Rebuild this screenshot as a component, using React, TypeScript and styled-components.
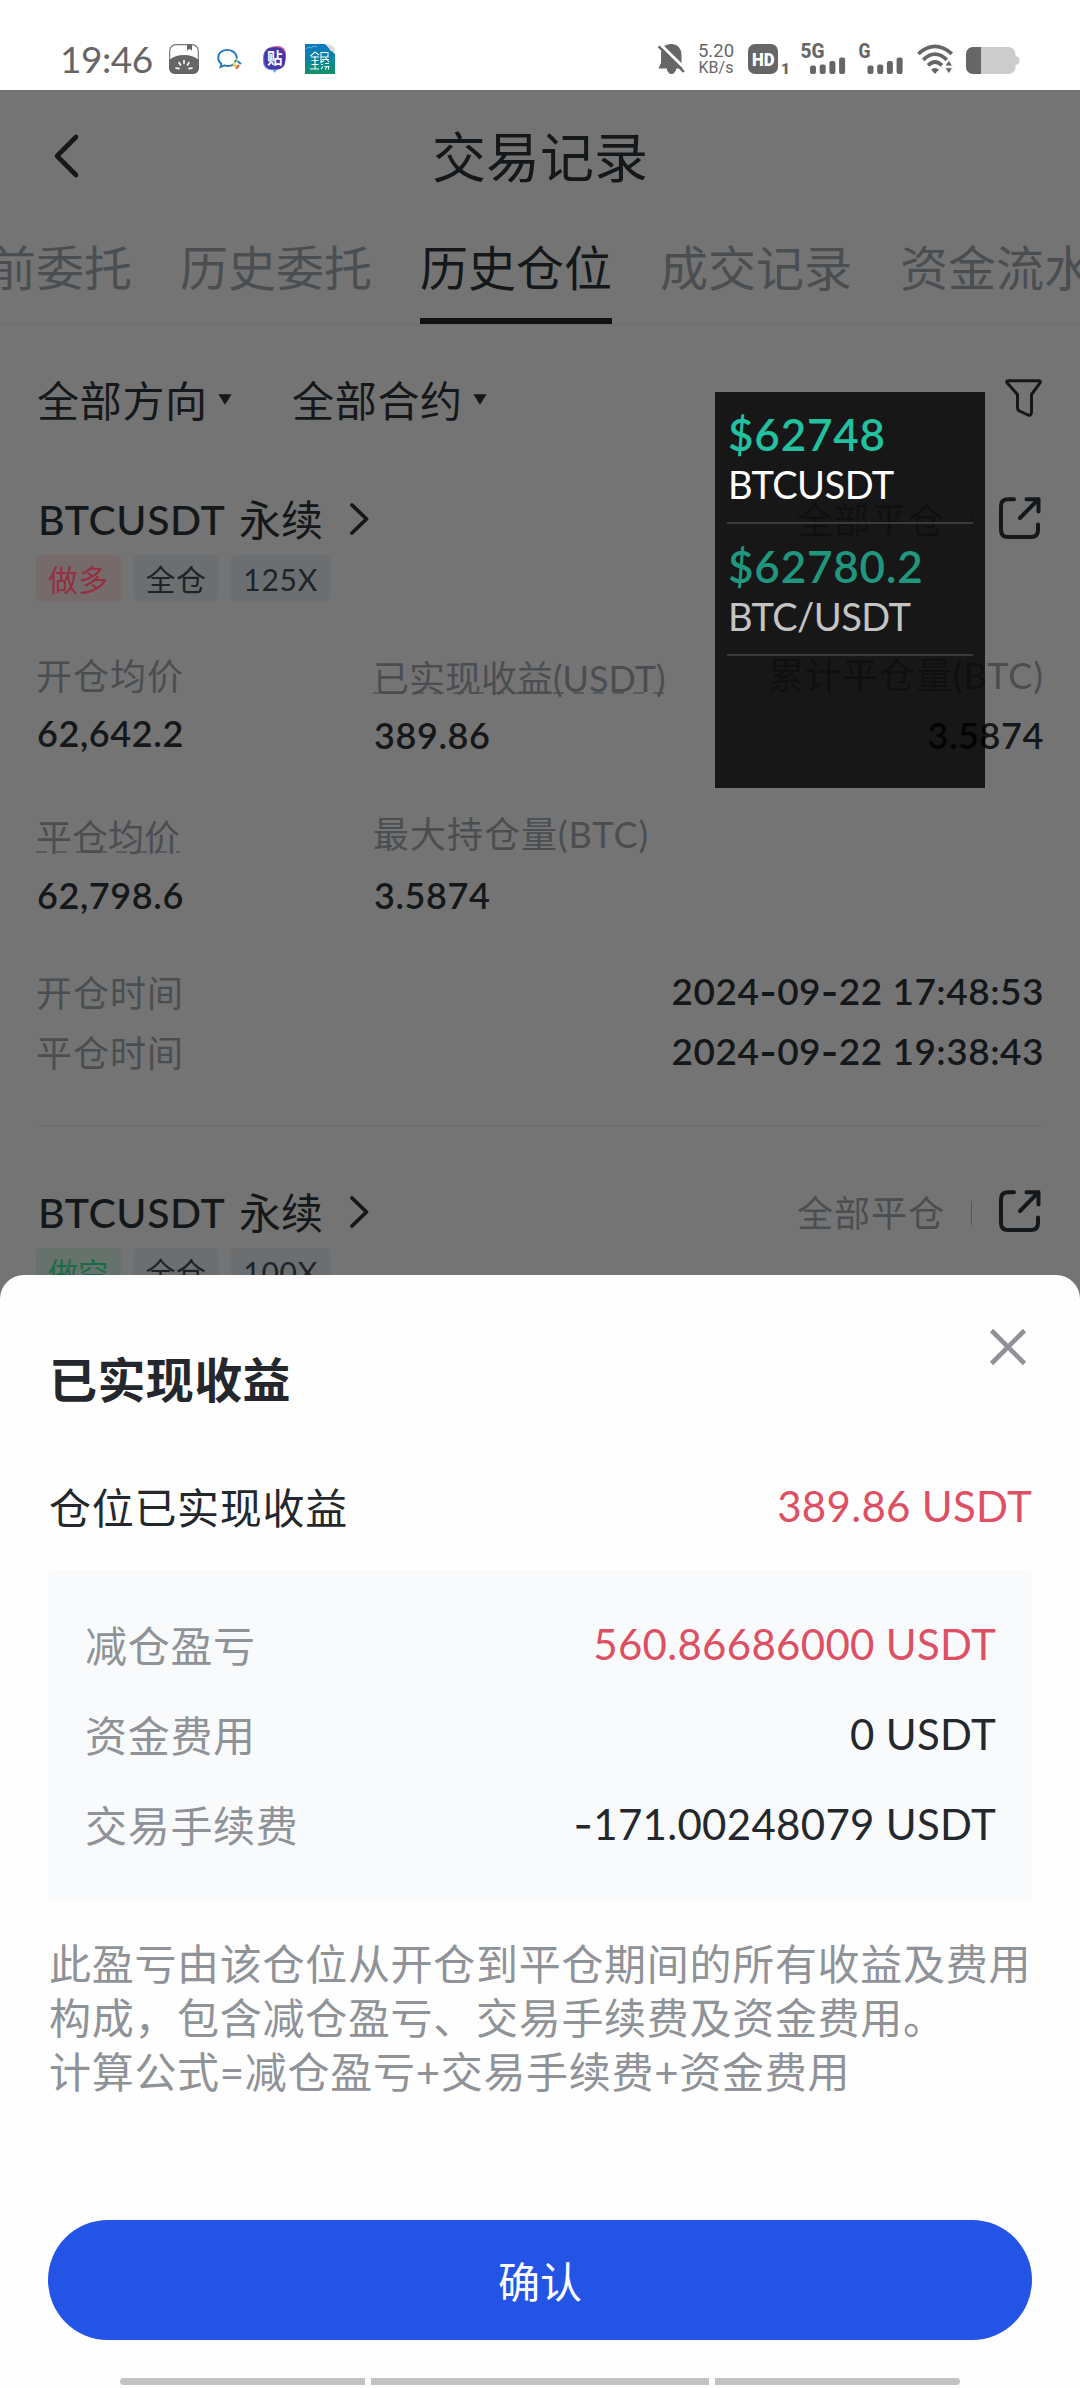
import React from "react";
import styled, { createGlobalStyle } from "styled-components";

const GlobalStyle = createGlobalStyle`
  * { box-sizing: border-box; }
  html, body { margin: 0; padding: 0; background: #fff; }
  body { font-family: Lato, "Noto Sans CJK SC", sans-serif; -webkit-font-smoothing: antialiased; }
`;

const ink = "#15181a";
const dim = "#4b4e51";
const grey = "#8f9397";
const red = "#dd5063";

const Phone = styled.div`
  position: relative;
  width: 1080px;
  height: 2388px;
  display: flex;
  flex-direction: column;
  overflow: hidden;
  background: #747474;
  white-space: nowrap;
`;

/* ---------- status bar ---------- */
const StatusBar = styled.div`
  height: 90px;
  flex: none;
  display: flex;
  align-items: flex-start;
  justify-content: space-between;
  padding: 44px 60px 0;
  background: #fff;
  color: #666;
`;
const StatusGroup = styled.div`
  display: flex;
  align-items: flex-start;
`;
const Clock = styled.div`
  width: 109px;
  font-size: 37px;
  line-height: 29px;
  letter-spacing: -0.5px;
`;
const Icon = styled.svg<{ $w: number; $h: number; $ml?: number; $mt?: number }>`
  display: block;
  flex: none;
  width: ${(p) => p.$w}px;
  height: ${(p) => p.$h}px;
  margin-left: ${(p) => p.$ml ?? 0}px;
  margin-top: ${(p) => p.$mt ?? 0}px;
  overflow: visible;
`;
const NetSpeed = styled.div`
  display: flex;
  flex-direction: column;
  align-items: center;
  width: 40px;
  margin-left: 11px;
  font-family: Roboto, sans-serif;
  font-size: 18.5px;
  line-height: 15px;
`;
const SpeedUnit = styled.span`
  font-size: 16px;
  line-height: 18px;
`;

/* ---------- page behind the sheet ---------- */
const Main = styled.div`
  height: 1185px;
  flex: none;
  overflow: hidden;
  color: ${ink};
`;
const Header = styled.div`
  height: 136px;
  display: grid;
  grid-template-columns: 200px 1fr 200px;
  align-items: center;
`;
const Title = styled.div`
  font-size: 54px;
  line-height: 60px;
  text-align: center;
`;
const Tabs = styled.div`
  height: 99px;
  display: flex;
  gap: 48px;
  margin-left: -60px;
  width: 1200px;
  border-bottom: 1px solid #6e6e6e;
`;
const Tab = styled.div<{ $active?: boolean }>`
  width: 192px;
  flex: none;
  height: 98px;
  font-size: 48px;
  line-height: 83px;
  color: ${(p) => (p.$active ? ink : dim)};
  border-bottom: 6px solid ${(p) => (p.$active ? "#101213" : "transparent")};
`;
const Filters = styled.div`
  height: 151px;
  display: flex;
  align-items: center;
  padding: 0 38px 0 37px;
  font-size: 42px;
  line-height: 60px;
  letter-spacing: 0.7px;
`;
const Filter = styled.div`
  display: flex;
  align-items: center;
  width: 255px;
`;
const Spacer = styled.div`
  flex: 1;
`;

const Record = styled.div`
  height: 693px;
  padding: 9px 36px 0;
`;
const RecordHead = styled.div`
  height: 70px;
  display: flex;
  align-items: center;
  padding-right: 3px;
`;
const Symbol = styled.span`
  width: 203px;
  padding-left: 2px;
  font-size: 41px;
  font-weight: 500;
  line-height: 60px;
  letter-spacing: 0.6px;
`;
const Kind = styled.span`
  font-size: 42px;
  line-height: 60px;
`;
const CloseState = styled.span`
  font-size: 36px;
  line-height: 60px;
  letter-spacing: 1px;
  color: ${dim};
`;
const Bar = styled.span`
  width: 1px;
  height: 24px;
  margin: 0 27px 0 26px;
  background: #55585a;
`;
const Tags = styled.div`
  display: flex;
  gap: 13px;
`;
const Tag = styled.span<{ $tone?: "long" | "short" }>`
  height: 47px;
  padding: 0 12px;
  border-radius: 5px;
  font-size: 30px;
  line-height: 48px;
  letter-spacing: 0.3px;
  color: ${(p) => (p.$tone === "long" ? "#952f41" : p.$tone === "short" ? "#1c6b47" : "#1f2327")};
  background: ${(p) => (p.$tone === "long" ? "#766b6b" : p.$tone === "short" ? "#67726c" : "#6b6f71")};
`;
const Lever = styled.span`
  display: inline-block;
  min-width: 74px;
  text-align: center;
  letter-spacing: 0.8px;
`;
const Stats = styled.div<{ $h: number; $mt?: number }>`
  height: ${(p) => p.$h}px;
  margin-top: ${(p) => p.$mt ?? 0}px;
  display: grid;
  grid-template-columns: 337px 1fr auto;
`;
const Cell = styled.div<{ $right?: boolean; $top?: number }>`
  display: flex;
  flex-direction: column;
  align-items: ${(p) => (p.$right ? "flex-end" : "flex-start")};
  padding-top: ${(p) => p.$top ?? 0}px;
`;
const Label = styled.div<{ $h: number; $dashed?: boolean }>`
  height: ${(p) => p.$h}px;
  font-size: 36px;
  line-height: ${(p) => p.$h}px;
  letter-spacing: ${(p) => (p.$dashed ? 0 : 1)}px;
  color: ${dim};
  background: ${(p) =>
    p.$dashed
      ? "repeating-linear-gradient(90deg, #585b5d 0 11px, transparent 11px 20px) 0 42px / 100% 2px no-repeat"
      : "none"};
`;
const Value = styled.div<{ $h: number }>`
  padding-left: 1px;
  font-size: 36px;
  font-weight: 600;
  line-height: ${(p) => p.$h}px;
  letter-spacing: 0.6px;
`;
const TimeRow = styled.div`
  height: 60px;
  display: flex;
  justify-content: space-between;
  line-height: 60px;
  font-size: 36px;
  letter-spacing: 1px;
  color: ${dim};
`;
const TimeValue = styled.span`
  line-height: 56px;
  font-size: 37px;
  font-weight: 600;
  letter-spacing: 0.5px;
  color: ${ink};
`;
const Dash = styled.span`
  font-family: Inter, sans-serif;
  line-height: 0;
`;
const Rule = styled.div`
  height: 2px;
  margin-top: 42px;
  background: #6f6f6f;
`;

/* ---------- floating ticker ---------- */
const Ticker = styled.div`
  position: absolute;
  left: 715px;
  top: 392px;
  width: 270px;
  height: 396px;
  padding: 0 12px;
  background: rgba(0, 0, 0, 0.8);
`;
const Quote = styled.div<{ $dim?: boolean }>`
  height: 132px;
  padding: 16px 0 0 1px;
  border-bottom: 2px solid #3a3a3a;
  color: ${(p) => (p.$dim ? "#c4c4c4" : "#fff")};
`;
const Price = styled.div<{ $dim?: boolean }>`
  font-size: 44px;
  font-weight: 600;
  line-height: 52px;
  letter-spacing: 0.8px;
  color: ${(p) => (p.$dim ? "#20967e" : "#22c1a0")};
`;
const Pair = styled.div`
  font-size: 38px;
  line-height: 48px;
  letter-spacing: -0.5px;
`;

/* ---------- bottom sheet ---------- */
const Sheet = styled.div`
  flex: 1;
  display: flex;
  flex-direction: column;
  padding: 0 48px;
  border-radius: 24px 24px 0 0;
  background: #fefefe;
  color: #24282c;
`;
const SheetHead = styled.div`
  height: 176px;
  display: flex;
  justify-content: space-between;
`;
const SheetTitle = styled.div`
  margin-top: 75px;
  padding-left: 1px;
  font-size: 48px;
  line-height: 60px;
  font-weight: 700;
  letter-spacing: 0.4px;
`;
const SummaryRow = styled.div`
  height: 114px;
  margin-bottom: 5px;
  padding-left: 1px;
  display: flex;
  justify-content: space-between;
  font-size: 42px;
  line-height: 114px;
  letter-spacing: 0.7px;
`;
const Amount = styled.span<{ $red?: boolean }>`
  margin-top: -2px;
  font-size: 42px;
  letter-spacing: 0.3px;
  color: ${(p) => (p.$red ? red : "#24282c")};
`;
const Breakdown = styled.div`
  height: 329px;
  padding: 31px 36px 0 37px;
  border-radius: 4px;
  background: #f9fafc;
`;
const BreakdownRow = styled.div`
  height: 90px;
  display: flex;
  justify-content: space-between;
  font-size: 42px;
  line-height: 90px;
  letter-spacing: 0.7px;
  color: ${grey};
`;
const Note = styled.div`
  margin-top: 38px;
  padding-left: 1px;
  font-size: 42px;
  line-height: 54px;
  letter-spacing: 0.7px;
  color: ${grey};
`;
const Confirm = styled.button`
  height: 120px;
  margin-top: auto;
  border: 0;
  border-radius: 60px;
  background: #2454e6;
  color: #fff;
  font: 400 42px/122px Lato, "Noto Sans CJK SC", sans-serif;
`;
const NavBars = styled.div`
  height: 48px;
  flex: none;
  display: flex;
  gap: 6px;
  padding: 38px 72px 3px;
`;
const NavBar = styled.span<{ $w: number; $radius: string }>`
  width: ${(p) => p.$w}px;
  height: 7px;
  border-radius: ${(p) => p.$radius};
  background: #c3c3c3;
`;

/* ---------- icons ---------- */
const MelonIcon = () => (
  <Icon $w={30} $h={30} viewBox="0 0 30 30">
    <rect x=".7" y=".7" width="28.6" height="28.6" rx="6" fill="#fff" stroke="#777" strokeWidth="1.2" />
    <path d="M.3 16C4 12.500 9 11 15 11s11 1.500 14.700 5l.3 8a6 6 0 0 1-6 6H6a6 6 0 0 1-6-6z" fill="#666" />
    <path d="M18 .8h5v6l-2.500-2-2.500 2z" fill="#666" />
    <path d="M15 16.500v3M10 18.500l1.500 2.500M20 18.500L18.500 21M7 24l3 .6M23 24l-3 .6" stroke="#fff" strokeWidth="1.600" strokeLinecap="round" />
  </Icon>
);
const ChatIcon = () => (
  <Icon $w={25} $h={22} $ml={18} $mt={5} viewBox="0 0 25 22">
    <path d="M17.500 14.800C15 17 10.500 17.500 7.500 16.300L3.600 18l.7-3.300C-.6 10.500.6 3.600 6.500 1.600c6.500-2.200 13.500 1.600 13.300 8.100" fill="none" stroke="#2277bd" strokeWidth="1.900" />
    <path d="M19.500 10.500l-1.800 3" stroke="#4ba53d" strokeWidth="2.200" />
    <path d="M20.500 12l3.500 3" stroke="#2c80c3" strokeWidth="2.200" />
    <path d="M15.800 14.500l3 3" stroke="#eac53a" strokeWidth="2.200" />
    <path d="M22 16l-3 3.800" stroke="#d56a3c" strokeWidth="2.200" />
  </Icon>
);
const StickerIcon = () => (
  <Icon $w={24} $h={28} $ml={21} $mt={2} viewBox="0 0 24 28">
    <path d="M9 22h6l-3.500 5z" fill="#4aa4f5" />
    <rect x="0" y="3" width="20" height="21" rx="8" fill="#5d8cf0" />
    <rect x="5" y="0" width="18" height="20" rx="8" fill="#df5f96" />
    <rect x="1.200" y="1.200" width="21" height="22" rx="7.500" fill="#4a35a8" />
    <text x="11.700" y="17.800" textAnchor="middle" fontSize="15.500" fontWeight="700" fill="#fff" fontFamily="Noto Sans CJK SC">贴</text>
  </Icon>
);
const CityIcon = () => (
  <Icon $w={30} $h={30} $ml={18} viewBox="0 0 30 30">
    <defs>
      <linearGradient id="city" x1="0" y1="0" x2="0" y2="1">
        <stop offset="0" stopColor="#0b78c4" />
        <stop offset=".5" stopColor="#0785a3" />
        <stop offset="1" stopColor="#13936a" />
      </linearGradient>
    </defs>
    <path d="M0 0h20l10 10v20H0z" fill="url(#city)" />
    <path d="M20 0c3 2 4.500 4 5 6.500 2 .5 3.500 1.500 5 3.500l-.2-6C28 2 25 .3 20 0z" fill="#dcdcdc" />
    <path d="M1 5l3-2 2 1 3-2 3 1" stroke="#5db6e6" fill="none" />
    <path d="M10 8l-4.500 4M10 8l4 3M6 13h8M6.500 16.500h7M10 12v13M6.500 20.500h7M5 25h9M16 8.500h7v4.500h-7zM16 8.500v10l3-2M17 15.500h7M20 13l4 5M16 20.500h2M20 19.500h4M16 25l2-2.500M19.500 22.500h5M21.500 22.500l-1 3M23.500 22.500v3" fill="none" stroke="#fff" strokeWidth="1.050" />
  </Icon>
);
const BellOff = () => (
  <Icon $w={27} $h={30} viewBox="0 0 27 30">
    <path d="M13 0c6.500 0 10.500 4.500 10.500 11v8l3 5.500H.500L3 19V10C3 4 7 0 13 0z" fill="#666" />
    <path d="M8.500 24h10c-.8 4-2.800 6-5 6s-4.200-2-5-6z" fill="#666" />
    <path d="M2.200.200L28.500 26" stroke="#fff" strokeWidth="3" />
    <path d="M.6 2.400L26 28" stroke="#666" strokeWidth="2.400" />
  </Icon>
);
const HdIcon = () => (
  <Icon $w={40} $h={30} $ml={12} viewBox="0 0 40 30">
    <rect width="30" height="30" rx="7" fill="#666" />
    <text x="4" y="21.800" fontSize="19" fontWeight="900" fill="#fff" fontFamily="Roboto" textLength="22.500" lengthAdjust="spacingAndGlyphs">HD</text>
    <text x="33" y="29.700" fontSize="15.500" fontWeight="900" fill="#666" fontFamily="Roboto">1</text>
  </Icon>
);
const SignalIcon = ({ label, ml }: { label: string; ml: number }) => {
  const shift = label === "G" ? 8.5 : 9;
  return (
    <Icon $w={45} $h={30} $ml={ml} viewBox="0 0 45 30">
      <text x="-.5" y="14.200" fontSize="19.500" fontWeight="800" fill="#666" fontFamily="Roboto" textLength={label === "G" ? 12 : 24} lengthAdjust="spacingAndGlyphs">{label}</text>
      {[8.5, 9.5, 13, 16.5].map((h, i) => (
        <rect key={i} x={shift + i * 9.7} y={30 - h} width="6" height={h} rx="2" fill="#666" />
      ))}
    </Icon>
  );
};
const WifiIcon = () => (
  <Icon $w={37} $h={30} $ml={13} viewBox="0 0 37 30">
    <g fill="none" stroke="#666" strokeWidth="3.700">
      <path d="M1.300 9.800Q18-5 34.800 9.800" />
      <path d="M6.300 15.800Q18 4.500 29.800 15.800" />
      <path d="M11 21.300Q18 14.800 25 21.300" />
    </g>
    <path d="M14 25.500q4-3 8 0l-4 4.500z" fill="#666" />
    <path d="M28 22l3.800-6 3.800 6zM28 23.800l3.800 6 3.800-6z" fill="#666" stroke="#fff" strokeWidth=".8" />
  </Icon>
);
const BatteryIcon = () => (
  <Icon $w={54} $h={27} $ml={12} $mt={3} viewBox="0 0 54 27">
    <rect width="49.500" height="27" rx="7" fill="#ccc" />
    <path d="M49 9q4.500.5 4.500 4.500T49 18z" fill="#ccc" />
    <path d="M7 0h8v27H7a7 7 0 0 1-7-7V7a7 7 0 0 1 7-7z" fill="#666" />
  </Icon>
);
const BackIcon = () => (
  <Icon $w={24} $h={42} $ml={54} $mt={-4} viewBox="0 0 24 42">
    <path d="M22 2L3 21l19 19" fill="none" stroke={ink} strokeWidth="4.600" strokeLinecap="round" strokeLinejoin="round" />
  </Icon>
);
const Caret = () => (
  <Icon $w={14} $h={11} $ml={10} $mt={-2} viewBox="0 0 14 11">
    <path d="M.4.3h13.200L7 10.800z" fill={ink} />
  </Icon>
);
const FunnelIcon = () => (
  <Icon $w={37} $h={38} $mt={-6} viewBox="0 0 37 38">
    <path d="M3 1.800h31q2 .2 1 2L26.500 15.500V33q0 4-3.500 3L14.500 32q-2-1-2-3V15.500L2 3.800q-1-1.800 1-2z" fill="none" stroke={ink} strokeWidth="3" strokeLinejoin="round" />
  </Icon>
);
const ChevronIcon = () => (
  <Icon $w={19} $h={32} $ml={27} $mt={-3} viewBox="0 0 19 32">
    <path d="M2 2l14.500 14L2 30" fill="none" stroke={ink} strokeWidth="3.800" strokeLinecap="round" strokeLinejoin="round" />
  </Icon>
);
const ShareIcon = () => (
  <Icon $w={42} $h={42} $mt={-4} viewBox="0 0 42 42">
    <g fill="none" stroke={ink} strokeWidth="4" strokeLinecap="round" strokeLinejoin="round">
      <path d="M15 2.200H9Q2 2.200 2 9v24q0 7 7 7h23q7 0 7-7v-5.500" />
      <path d="M27.500 2.200H39.500V14.500M39.500 2.200L21 21" />
    </g>
  </Icon>
);
const CloseIcon = () => (
  <Icon $w={36} $h={36} $mt={54} viewBox="0 0 36 36">
    <path d="M1.500 1.500l33 33M34.500 1.500l-33 33" stroke="#8f9398" strokeWidth="4.600" />
  </Icon>
);
const CloseButton = styled.span`
  margin-right: 6px;
`;

const withDashes = (text: string) =>
  text.split("-").map((part, i) => (
    <React.Fragment key={i}>
      {i > 0 && <Dash>-</Dash>}
      {part}
    </React.Fragment>
  ));

const RecordTop = ({ tone, side, lever }: { tone: "long" | "short"; side: string; lever: string }) => (
  <>
    <RecordHead>
      <Symbol>BTCUSDT</Symbol>
      <Kind>永续</Kind>
      <ChevronIcon />
      <Spacer />
      <CloseState>全部平仓</CloseState>
      <Bar />
      <ShareIcon />
    </RecordHead>
    <Tags>
      <Tag $tone={tone}>{side}</Tag>
      <Tag>全仓</Tag>
      <Tag><Lever>{lever}</Lever></Tag>
    </Tags>
  </>
);

export default function App() {
  return (
    <Phone>
      <GlobalStyle />
      <StatusBar>
        <StatusGroup>
          <Clock>19:46</Clock>
          <MelonIcon />
          <ChatIcon />
          <StickerIcon />
          <CityIcon />
        </StatusGroup>
        <StatusGroup>
          <BellOff />
          <NetSpeed>
            <span>5.20</span>
            <SpeedUnit>KB/s</SpeedUnit>
          </NetSpeed>
          <HdIcon />
          <SignalIcon label="5G" ml={13} />
          <SignalIcon label="G" ml={13} />
          <WifiIcon />
          <BatteryIcon />
        </StatusGroup>
      </StatusBar>

      <Main>
        <Header>
          <BackIcon />
          <Title>交易记录</Title>
        </Header>
        <Tabs>
          <Tab>当前委托</Tab>
          <Tab>历史委托</Tab>
          <Tab $active>历史仓位</Tab>
          <Tab>成交记录</Tab>
          <Tab>资金流水</Tab>
        </Tabs>
        <Filters>
          <Filter>全部方向<Caret /></Filter>
          <Filter>全部合约<Caret /></Filter>
          <Spacer />
          <FunnelIcon />
        </Filters>

        <Record>
          <RecordTop tone="long" side="做多" lever="125X" />
          <Stats $h={161} $mt={46}>
            <Cell>
              <Label $h={56}>开仓均价</Label>
              <Value $h={59}>62,642.2</Value>
            </Cell>
            <Cell $top={2}>
              <Label $h={57} $dashed>已实现收益(USDT)</Label>
              <Value $h={57}>389.86</Value>
            </Cell>
            <Cell $right>
              <Label $h={55}>累计平仓量(BTC)</Label>
              <Value $h={65}>3.5874</Value>
            </Cell>
          </Stats>
          <Stats $h={154}>
            <Cell>
              <Label $h={56} $dashed>平仓均价</Label>
              <Value $h={60}>62,798.6</Value>
            </Cell>
            <Cell>
              <Label $h={51}>最大持仓量(BTC)</Label>
              <Value $h={70}>3.5874</Value>
            </Cell>
          </Stats>
          <TimeRow>开仓时间<TimeValue>{withDashes("2024-09-22 17:48:53")}</TimeValue></TimeRow>
          <TimeRow>平仓时间<TimeValue>{withDashes("2024-09-22 19:38:43")}</TimeValue></TimeRow>
          <Rule />
        </Record>
        <Record>
          <RecordTop tone="short" side="做空" lever="100X" />
        </Record>
      </Main>

      <Sheet>
        <SheetHead>
          <SheetTitle>已实现收益</SheetTitle>
          <CloseButton><CloseIcon /></CloseButton>
        </SheetHead>
        <SummaryRow>
          仓位已实现收益
          <Amount $red>389.86 USDT</Amount>
        </SummaryRow>
        <Breakdown>
          <BreakdownRow>减仓盈亏<Amount $red>560.86686000 USDT</Amount></BreakdownRow>
          <BreakdownRow>资金费用<Amount>0 USDT</Amount></BreakdownRow>
          <BreakdownRow>交易手续费<Amount>{withDashes("-171.00248079 USDT")}</Amount></BreakdownRow>
        </Breakdown>
        <Note>
          此盈亏由该仓位从开仓到平仓期间的所有收益及费用<br />
          构成，包含减仓盈亏、交易手续费及资金费用。<br />
          计算公式=减仓盈亏+交易手续费+资金费用
        </Note>
        <Confirm>确认</Confirm>
        <NavBars>
          <NavBar $w={245} $radius="4px 0 0 4px" />
          <NavBar $w={338} $radius="0" />
          <NavBar $w={245} $radius="0 4px 4px 0" />
        </NavBars>
      </Sheet>

      <Ticker>
        <Quote>
          <Price>$62748</Price>
          <Pair>BTCUSDT</Pair>
        </Quote>
        <Quote $dim>
          <Price $dim>$62780.2</Price>
          <Pair>BTC/USDT</Pair>
        </Quote>
      </Ticker>
    </Phone>
  );
}
